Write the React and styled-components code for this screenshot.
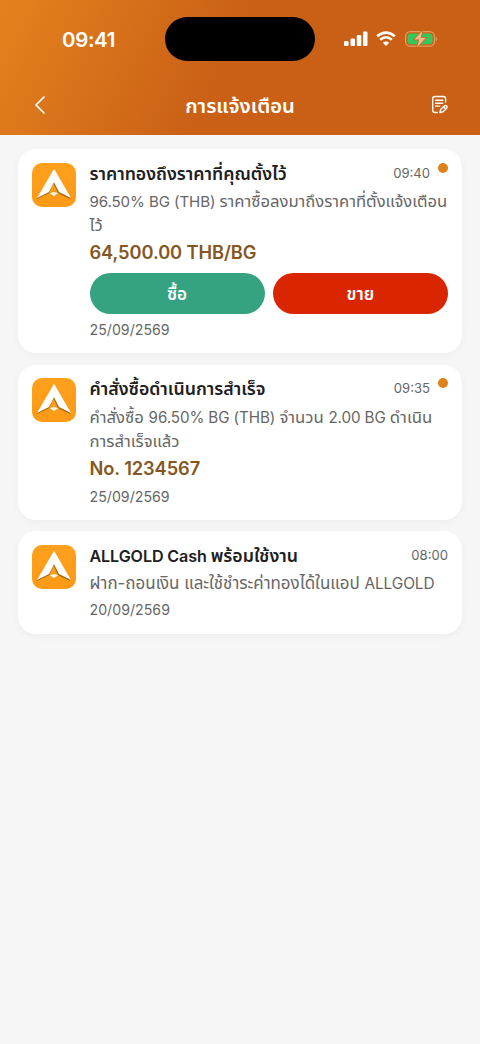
import React from "react";
import styled, { createGlobalStyle } from "styled-components";

const GlobalStyle = createGlobalStyle`
  * {
    box-sizing: border-box;
  }
  body {
    margin: 0;
    background: #f6f6f6;
    font-family: Inter, "Noto Sans Thai", "Noto Sans", sans-serif;
  }
`;

const Page = styled.div`
  min-height: 1044px;
  background: #f6f6f6;
`;

const Header = styled.header`
  height: 135px;
  color: #fff;
  background: linear-gradient(116deg, #e5821e 0%, #c96016 47%, #c96016 100%);
`;

const StatusBar = styled.div`
  height: 78px;
  padding-top: 17px;
  display: grid;
  grid-template-columns: 165px 150px 165px;
`;

const Clock = styled.div`
  padding-left: 62px;
  font-size: 20.5px;
  font-weight: 600;
  line-height: 45px;
  letter-spacing: -0.35px;
`;

const Island = styled.div`
  height: 44px;
  border-radius: 22px;
  background: #000;
`;

const Signals = styled.div`
  height: 44px;
  padding-left: 28px;
  display: flex;
  align-items: center;
`;

const NavBar = styled.div`
  height: 54px;
  padding: 0 27px 0 31px;
  display: grid;
  grid-template-columns: 24px 1fr 24px;
  align-items: center;
`;

const NavTitle = styled.h1`
  margin: 0;
  padding-right: 4px;
  text-align: center;
  font-size: 20.2px;
  font-weight: 600;
  line-height: 29px;
`;

const IconButton = styled.button`
  width: 24px;
  height: 24px;
  padding: 0;
  border: 0;
  background: none;
  color: #fff;
  display: flex;
`;

const List = styled.main`
  padding: 14px 18px;
  display: flex;
  flex-direction: column;
  gap: 11.5px;
`;

const Card = styled.article`
  height: ${(p) => p.$height}px;
  padding: 13.5px 14px;
  display: flex;
  gap: 13.5px;
  border-radius: 18px;
  background: #fff;
  box-shadow: 0 2px 8px rgba(0, 0, 0, 0.04);
`;

const Content = styled.div`
  flex: 1;
  min-width: 0;
`;

const TitleRow = styled.div`
  height: 27.5px;
  display: flex;
  align-items: flex-start;
`;

// latin runs are set a little smaller than the thai around them
const Latin = styled.span`
  font-size: 0.91em;
  letter-spacing: -0.1px;
`;

const Title = styled.h2`
  flex: 1;
  margin: 0;
  font-size: 17.7px;
  font-weight: 600;
  line-height: 21px;
  color: #202020;
  white-space: nowrap;
`;

const Time = styled.time`
  font-size: 13.1px;
  line-height: 20px;
  color: #666;
`;

const Dot = styled.span`
  width: 10px;
  height: 10px;
  margin-left: 8px;
  border-radius: 50%;
  background: #df8019;
`;

const Line = styled.div`
  height: 24px;
  font-size: ${(p) => p.$size || 16.6}px;
  line-height: 23px;
  color: #666;
  white-space: nowrap;
`;

const Highlight = styled.div`
  margin-top: 1px;
  font-size: 18.3px;
  font-weight: 600;
  line-height: 27px;
  height: 28px;
  letter-spacing: -0.1px;
  color: #865722;
`;

const Actions = styled.div`
  margin: 6px 0 2px;
  display: grid;
  grid-template-columns: 1fr 1fr;
  gap: 8px;
`;

const ActionButton = styled.button`
  height: 41px;
  padding: 2px 0 0;
  border: 0;
  border-radius: 21px;
  background: ${(p) => p.$color};
  color: #fff;
  font-family: inherit;
  font-size: 17.2px;
  font-weight: 600;
`;

const DateText = styled.div`
  padding-top: 2px;
  font-size: 14.2px;
  line-height: 24px;
  color: #666;
`;

const Svg = styled.svg`
  display: block;
  flex: none;
`;

const StatusIcons = () => (
  <Svg width="96" height="20" viewBox="0 0 96 20">
    <g fill="#fff">
      <rect x="1" y="12" width="4.5" height="5" rx="1.2" />
      <rect x="7.5" y="9.5" width="4.5" height="7.5" rx="1.2" />
      <rect x="13.8" y="6" width="4.5" height="11" rx="1.2" />
      <rect x="20" y="2.5" width="4.5" height="14.5" rx="1.2" />
      <path d="M43 17 L39.8 13.7 Q43 11.2 46.2 13.7 Z" />
    </g>
    <g fill="none" stroke="#fff" strokeWidth="2.6">
      <path d="M34.2 7.3 Q43 -0.2 51.8 7.3" />
      <path d="M37.2 10.8 Q43 5.7 48.8 10.8" />
    </g>
    <rect x="62.6" y="2.6" width="28.8" height="14.6" rx="4.6" fill="none" stroke="#e49b61" strokeWidth="1.3" />
    <rect x="64.6" y="4.6" width="24.8" height="10.6" rx="3" fill="#34c759" />
    <path d="M92.9 7.4 Q95.7 9.8 92.9 12.3 Z" fill="#e49b61" />
    <path d="M79.5 1.5 L71.3 10.6 H76.2 L74 18.5 L83 8.8 H77.8 Z" fill="#efb98d" stroke="#c96016" strokeWidth="1.4" paintOrder="stroke" />
  </Svg>
);

const NoteIcon = () => (
  <Svg width="24" height="24" viewBox="0 0 24 24" fill="none" stroke="#fff" strokeWidth="1.4" strokeLinecap="round" strokeLinejoin="round">
    <path d="M16.6 9V5.7Q16.6 3.5 14.4 3.5H6Q3.7 3.5 3.7 5.8V17.2Q3.7 19.5 6 19.5H8.2" />
    <path d="M6.6 7.3H13.8M6.6 10.2H13.8M6.6 13.1H10.8" />
    <path d="M11 19.5L11.6 16.5L15.8 12.8Q16.7 12 17.7 13T17.8 15L13.8 18.9Z" />
    <path d="M14.7 13.8L16.8 16" />
  </Svg>
);

const AppLogo = () => (
  <Svg width="44" height="44" viewBox="0 0 44 44">
    <defs>
      <linearGradient id="tile" x1="0" y1="0" x2="0" y2="1">
        <stop offset="0" stopColor="#ffa01c" />
        <stop offset="1" stopColor="#fd9a16" />
      </linearGradient>
    </defs>
    <rect width="44" height="44" rx="10" fill="url(#tile)" />
    <path d="M22 6L5 35.4L17.3 29.5L22 20L26.5 29.5L39 35.4Z" fill="#a96608" transform="translate(-.4 .8)" />
    <path d="M22 5.8L5 35L17 29L22 19.3L27 29L39 35Z" fill="#fff" />
    <path d="M17.2 30.3Q22 27 26.8 30.3L22 33.4Z" fill="#fff6d8" stroke="#d68910" strokeWidth=".6" />
  </Svg>
);

const notices = [
  {
    height: 204,
    title: "ราคาทองถึงราคาที่คุณตั้งไว้",
    time: "09:40",
    unread: true,
    lines: ["96.50% BG (THB) ราคาซื้อลงมาถึงราคาที่ตั้งแจ้งเตือน", "ไว้"],
    highlight: "64,500.00 THB/BG",
    actions: true,
    date: "25/09/2569",
  },
  {
    height: 155,
    title: "คำสั่งซื้อดำเนินการสำเร็จ",
    time: "09:35",
    unread: true,
    lines: ["คำสั่งซื้อ 96.50% BG (THB) จำนวน 2.00 BG ดำเนิน", "การสำเร็จแล้ว"],
    lineSize: 16.7,
    highlight: "No. 1234567",
    date: "25/09/2569",
  },
  {
    height: 103,
    title: "ALLGOLD Cash พร้อมใช้งาน",
    time: "08:00",
    lines: ["ฝาก-ถอนเงิน และใช้ชำระค่าทองได้ในแอป ALLGOLD"],
    lineSize: 16.95,
    date: "20/09/2569",
  },
];

const Mixed = ({ text }) =>
  text
    .split(/([A-Za-z0-9(][A-Za-z0-9().,%/ ]*)/)
    .map((part, i) => (i % 2 ? <Latin key={i}>{part}</Latin> : part));

const Notice = ({ item }) => (
  <Card $height={item.height}>
    <AppLogo />
    <Content>
      <TitleRow>
        <Title>
          <Mixed text={item.title} />
        </Title>
        <Time>{item.time}</Time>
        {item.unread && <Dot />}
      </TitleRow>
      {item.lines.map((line) => (
        <Line key={line} $size={item.lineSize}>
          <Mixed text={line} />
        </Line>
      ))}
      {item.highlight && <Highlight>{item.highlight}</Highlight>}
      {item.actions && (
        <Actions>
          <ActionButton $color="#35a382">ซื้อ</ActionButton>
          <ActionButton $color="#d92500">ขาย</ActionButton>
        </Actions>
      )}
      <DateText>{item.date}</DateText>
    </Content>
  </Card>
);

const App = () => {
  return (
    <Page>
      <GlobalStyle />
      <Header>
        <StatusBar>
          <Clock>09:41</Clock>
          <Island />
          <Signals>
            <StatusIcons />
          </Signals>
        </StatusBar>
        <NavBar>
          <IconButton aria-label="back">
            <Svg width="24" height="24" viewBox="0 0 24 24" fill="none" stroke="#fff" strokeWidth="1.7">
              <path d="M13.5 3.5L5 12L13.5 20.5" />
            </Svg>
          </IconButton>
          <NavTitle>การแจ้งเตือน</NavTitle>
          <IconButton aria-label="mark read">
            <NoteIcon />
          </IconButton>
        </NavBar>
      </Header>
      <List>
        {notices.map((item) => (
          <Notice key={item.title} item={item} />
        ))}
      </List>
    </Page>
  );
};

export default App;
